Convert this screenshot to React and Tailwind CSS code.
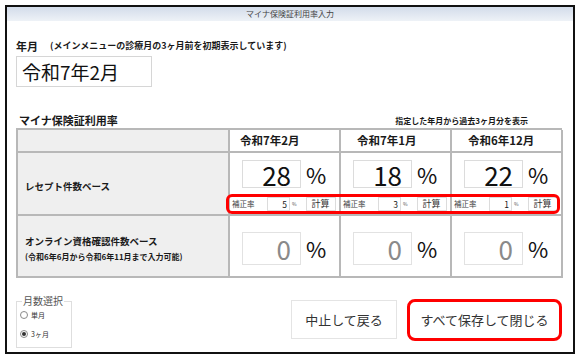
const months = [
  { label: "令和7年2月", rate: 28, adj: 5, pad: "pl-[10px]" },
  { label: "令和7年1月", rate: 18, adj: 3, pad: "pl-[16px]" },
  { label: "令和6年12月", rate: 22, adj: 1, pad: "pl-[16px]" },
];

const cell = "border-r-2 border-b-2 border-[#b8b8b8]";

function RateCell({ rate, adj }) {
  return (
    <div className={`${cell} bg-white flex flex-col`}>
      <div className="flex items-center mt-[7px] ml-[12px]">
        <div className="w-[59px] h-[28px] border border-[#dcdcdc] text-right pr-[9px] text-[26px] leading-[28px] text-[#111]">
          {rate}
        </div>
        <span className="ml-[5px] text-[22px] leading-[28px] text-[#111]">%</span>
      </div>
      <div className="flex items-center mt-[9px] h-[14px] ml-[2px]">
        <span className="w-[35px] text-[7.5px] leading-[14px] text-[#444]">補正率</span>
        <div className="w-[23px] h-[14px] border border-[#dcdcdc] text-right pr-[2px] text-[8.5px] leading-[12px]">
          {adj}
        </div>
        <span className="ml-[2px] text-[5px] leading-[14px] text-[#555]">%</span>
        <button className="ml-[9px] w-[30px] h-[14px] border border-[#dcdcdc] bg-white text-[9px] leading-[12px] text-[#333]">
          計算
        </button>
      </div>
    </div>
  );
}

function ZeroCell() {
  return (
    <div className={`${cell} bg-white`}>
      <div className="flex items-center mt-[16px] ml-[12px]">
        <div className="w-[59px] h-[33px] border border-[#e2e2e2] text-right pr-[9px] text-[26px] leading-[31px] text-[#8a8a8a]">
          0
        </div>
        <span className="ml-[5px] text-[22px] leading-[31px] text-[#111]">%</span>
      </div>
    </div>
  );
}

function Radio({ checked, label }) {
  return (
    <div className="flex items-center h-[12px]">
      <span className="w-[8px] h-[8px] rounded-full border border-[#8a8a8a] bg-white flex items-center justify-center">
        {checked && <span className="w-[4px] h-[4px] rounded-full bg-[#333]" />}
      </span>
      <span className="ml-[3px] text-[7px] leading-[12px] text-[#333]">{label}</span>
    </div>
  );
}

export default function App() {
  return (
    <div className="w-[581px] h-[364px] bg-white pl-[5px] pt-[5px] font-['Noto_Sans_CJK_JP',sans-serif] text-[#1a1a1a]">
      <div className="w-[570px] h-[349px] border-2 border-[#111] flex flex-col">
        <div className="h-[14px] bg-gradient-to-b from-[#d3dcea] to-[#eef2f7] text-[8px] leading-[14px] text-center text-[#444]">
          マイナ保険証利用率入力
        </div>

        <div className="pl-[9px] pr-[11px] flex flex-col">
          <div className="mt-[19px] h-[12px] flex items-center">
            <span className="text-[11px] leading-[12px] font-bold">年月</span>
            <span className="ml-[12px] text-[9px] leading-[12px] font-bold">
              (メインメニューの診療月の3ヶ月前を初期表示しています)
            </span>
          </div>

          <div className="mt-[4px] w-[136px] h-[31px] border border-[#d6d6d6] pl-[5px] text-[19px] leading-[29px] text-[#111]">
            令和7年2月
          </div>

          <div className="mt-[27px] h-[12px] flex items-end justify-between">
            <span className="ml-[3px] text-[11px] leading-[12px] font-bold">マイナ保険証利用率</span>
            <span className="mr-[34px] text-[8px] leading-[10px] font-bold">指定した年月から過去3ヶ月分を表示</span>
          </div>

          <div className="relative mt-[2px]">
            <div className="grid grid-cols-[212px_111px_111px_111px] grid-rows-[23px_63px_62px] border-l-2 border-t-2 border-[#b8b8b8]">
              <div className={`${cell} bg-[#efefef]`} />
              {months.map((m) => (
                <div key={m.label} className={`${cell} ${m.pad} bg-white flex items-center text-[11.5px] font-bold`}>
                  {m.label}
                </div>
              ))}

              <div className={`${cell} bg-[#efefef] flex items-center pl-[7px] pt-[6px] text-[9.5px] font-bold`}>
                レセプト件数ベース
              </div>
              {months.map((m) => (
                <RateCell key={m.label} rate={m.rate} adj={m.adj} />
              ))}

              <div className={`${cell} bg-[#efefef] flex flex-col justify-center pl-[7px] pt-[4px]`}>
                <span className="text-[9.5px] leading-[12px] font-bold">オンライン資格確認件数ベース</span>
                <span className="mt-[5px] text-[8px] leading-[10px] font-bold">
                  (令和6年6月から令和6年11月まで入力可能)
                </span>
              </div>
              <ZeroCell />
              <ZeroCell />
              <ZeroCell />
            </div>
            <div className="absolute left-[210px] top-[66px] w-[334px] h-[20px] border-[3px] border-[#ff0000] rounded-[6px]" />
          </div>

          <div className="mt-[18px] flex justify-between">
            <fieldset className="w-[56px] h-[52px] border border-[#dedede] pl-[3px]">
              <legend className="ml-[2px] px-[1px] text-[10px] leading-[10px] text-[#555]">月数選択</legend>
              <div className="mt-[3px] flex flex-col gap-[7px]">
                <Radio label="単月" />
                <Radio checked label="3ヶ月" />
              </div>
            </fieldset>

            <div className="flex items-center gap-[10px] h-[52px] pb-[5px]">
              <button className="w-[106px] h-[39px] border border-[#e4e4e4] bg-white text-[13px] text-[#333]">
                中止して戻る
              </button>
              <button className="w-[155px] h-[42px] border-[3px] border-[#ff0000] rounded-[8px] bg-white text-[13px] text-[#333]">
                すべて保存して閉じる
              </button>
            </div>
          </div>
        </div>
      </div>
    </div>
  );
}
